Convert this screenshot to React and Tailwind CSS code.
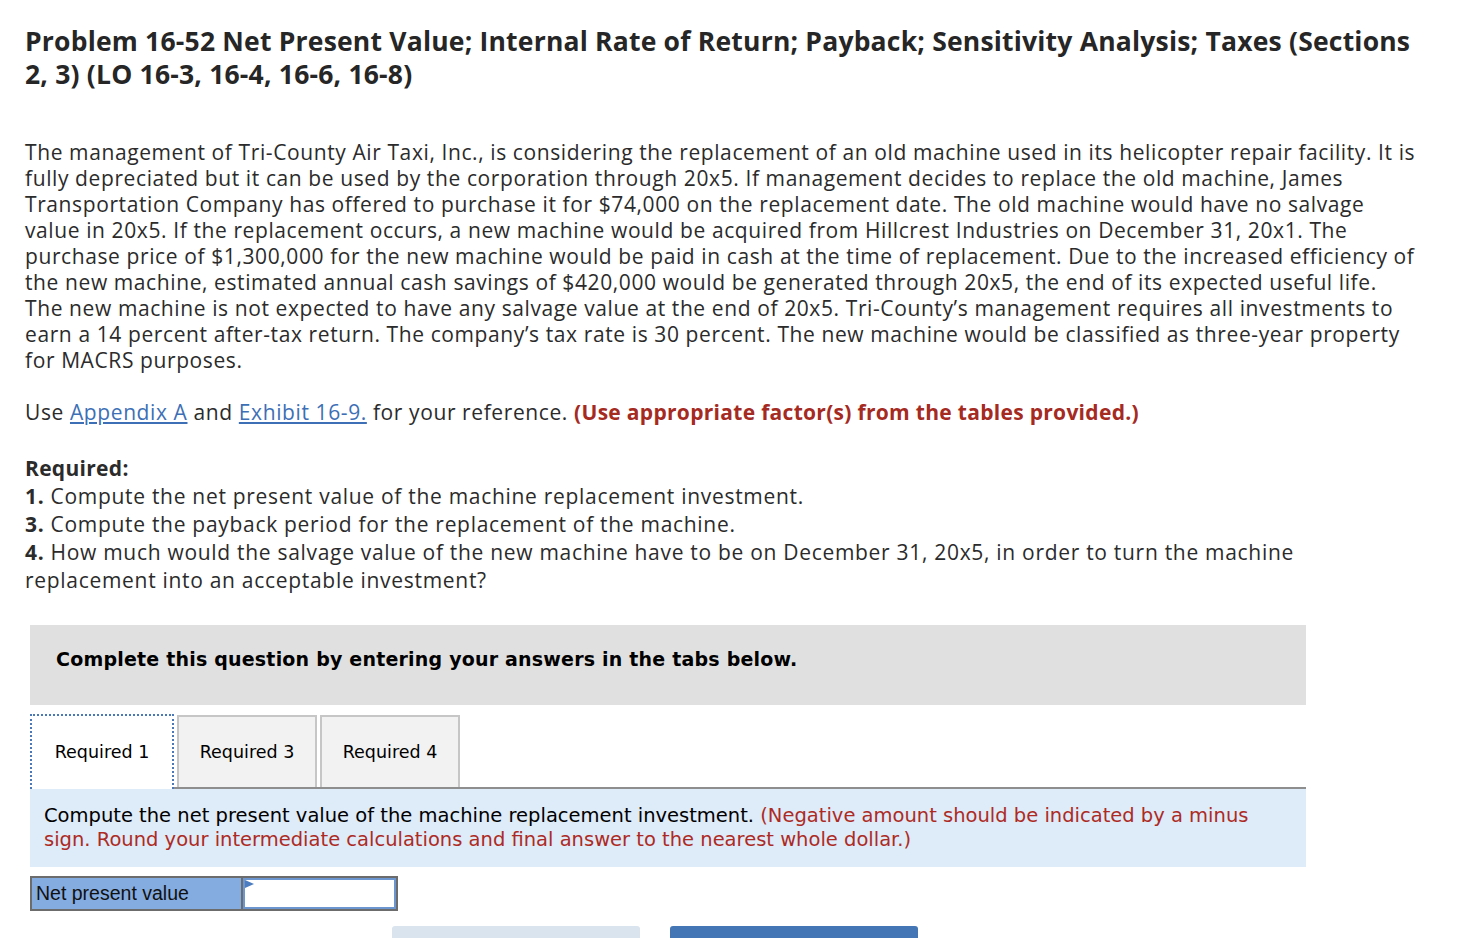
import React from 'react';

const sans = { fontFamily: '"Open Sans", "Liberation Sans", sans-serif' };
const verdana = { fontFamily: '"DejaVu Sans", Verdana, sans-serif' };

const paragraph = [
  'The management of Tri-County Air Taxi, Inc., is considering the replacement of an old machine used in its helicopter repair facility. It is',
  'fully depreciated but it can be used by the corporation through 20x5. If management decides to replace the old machine, James',
  'Transportation Company has offered to purchase it for $74,000 on the replacement date. The old machine would have no salvage',
  'value in 20x5. If the replacement occurs, a new machine would be acquired from Hillcrest Industries on December 31, 20x1. The',
  'purchase price of $1,300,000 for the new machine would be paid in cash at the time of replacement. Due to the increased efficiency of',
  'the new machine, estimated annual cash savings of $420,000 would be generated through 20x5, the end of its expected useful life.',
  'The new machine is not expected to have any salvage value at the end of 20x5. Tri-County\u2019s management requires all investments to',
  'earn a 14 percent after-tax return. The company\u2019s tax rate is 30 percent. The new machine would be classified as three-year property',
  'for MACRS purposes.',
];

function Tab({ label, active }) {
  if (active) {
    return (
      <div className="w-[144px] h-[75px] bg-white border-2 border-dotted border-[#4a78b8] border-b-0 flex items-center justify-center text-[17.5px] text-black -mb-[2px] relative z-10">
        {label}
      </div>
    );
  }
  return (
    <div className="w-[140px] h-[72px] bg-[#f2f2f2] border-2 border-[#c6c6c6] border-b-0 flex items-center justify-center text-[17.5px] text-black">
      {label}
    </div>
  );
}

export default function App() {
  return (
    <div className="bg-white min-h-[938px] overflow-hidden text-[#2b2b2b]" style={sans}>
      <div className="pl-[25px] pt-[25px] w-[1460px]">
        <h1 className="text-[26.5px] leading-[33px] font-bold text-[#262626] tracking-[0.2px]">
          Problem 16-52 Net Present Value; Internal Rate of Return; Payback; Sensitivity Analysis; Taxes (Sections
          <br />
          2, 3) (LO 16-3, 16-4, 16-6, 16-8)
        </h1>

        <p className="mt-[48px] text-[21px] leading-[26px] tracking-[0.6px] whitespace-nowrap">
          {paragraph.map((line, i) => (
            <React.Fragment key={i}>
              {line}
              {i < paragraph.length - 1 && <br />}
            </React.Fragment>
          ))}
        </p>

        <p className="mt-[26px] text-[21px] leading-[26px] tracking-[0.6px]">
          Use <a className="text-[#3d6fb6] underline underline-offset-2">Appendix A</a> and{' '}
          <a className="text-[#3d6fb6] underline underline-offset-2">Exhibit 16-9.</a> for your reference.{' '}
          <span className="font-bold text-[#a52a1f] tracking-[0.3px]">(Use appropriate factor(s) from the tables provided.)</span>
        </p>

        <div className="mt-[29px] text-[21px] leading-[28px] tracking-[0.7px]">
          <div className="font-bold tracking-[0.3px]">Required:</div>
          <div><span className="font-bold">1.</span> Compute the net present value of the machine replacement investment.</div>
          <div><span className="font-bold">3.</span> Compute the payback period for the replacement of the machine.</div>
          <div>
            <span className="font-bold">4.</span> How much would the salvage value of the new machine have to be on December 31, 20x5, in order to turn the machine
            <br />
            replacement into an acceptable investment?
          </div>
        </div>
      </div>

      <div className="ml-[30px] w-[1276px] mt-[31px]" style={verdana}>
        <div className="h-[80px] bg-[#e0e0e0] pl-[26px] pt-[20px] text-[19px] font-bold text-black tracking-[0.2px]">
          Complete this question by entering your answers in the tabs below.
        </div>

        <div className="mt-[9px] flex items-end gap-[3px] border-b-2 border-[#8e8e8e]">
          <Tab label="Required 1" active />
          <Tab label="Required 3" />
          <Tab label="Required 4" />
        </div>

        <div className="h-[78px] bg-[#deebf8] pl-[14px] pt-[15px] text-[19.5px] leading-[24px] text-black">
          Compute the net present value of the machine replacement investment.{' '}
          <span className="text-[#ad2a24]">
            (Negative amount should be indicated by a minus
            <br />
            sign. Round your intermediate calculations and final answer to the nearest whole dollar.)
          </span>
        </div>

        <div className="mt-[9px] flex w-[368px] h-[35px] border-2 border-[#6c6c6c] bg-[#6c6c6c]">
          <div
            className="w-[209px] bg-[#84ace0] pl-[4px] flex items-center text-[19.5px] text-[#111]"
            style={{ fontFamily: '"Liberation Sans", Arial, sans-serif' }}
          >
            Net present value
          </div>
          <div className="relative flex-1 ml-[2px] bg-white border-2 border-[#6b96d0]">
            <svg className="absolute left-0 top-0" width="10" height="10" viewBox="0 0 10 10">
              <polygon points="0,0 9,4 0,8" fill="#4b7dc0" />
            </svg>
          </div>
        </div>

        <div className="mt-[15px] flex gap-[30px] pl-[362px]">
          <div className="w-[248px] h-[20px] bg-[#d9e4ef] rounded-t-[3px]" />
          <div className="w-[248px] h-[20px] bg-[#4475b4] rounded-t-[3px]" />
        </div>
      </div>
    </div>
  );
}
